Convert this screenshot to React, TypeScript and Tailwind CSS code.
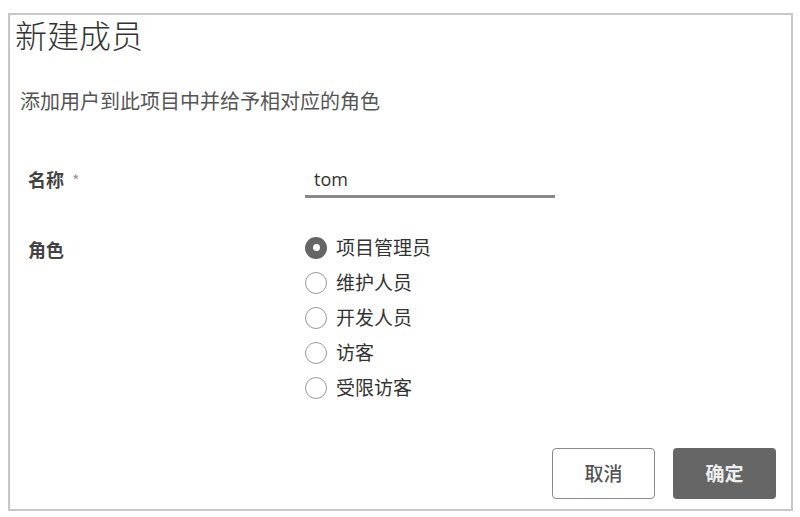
import { useState } from 'react';

const ROLES = ['项目管理员', '维护人员', '开发人员', '访客', '受限访客'];

const FONT = { fontFamily: '"Noto Sans CJK SC", "Noto Sans", sans-serif' };

export default function App() {
  const [name, setName] = useState('tom');
  const [role, setRole] = useState(ROLES[0]);

  return (
    <div className="bg-white w-[800px] h-[517px] pt-[13px] pl-[8px]" style={FONT}>
      <div className="w-[785px] h-[498px] border-2 border-[#c8c8c8] flex flex-col">
        <h1 className="pl-[5px] text-[32px] leading-[38px] font-light text-[#333]">新建成员</h1>

        <p className="mt-[34px] pl-[10px] text-[20px] leading-[28px] text-[#555]">
          添加用户到此项目中并给予相对应的角色
        </p>

        <div className="mt-[45px] flex items-center">
          <label className="w-[277px] ml-[18px] text-[18px] font-bold text-[#444]">
            名称<span className="ml-[8px] text-[#999] font-normal text-[16px]">*</span>
          </label>
          <div className="w-[250px] h-[38px] border-b-[3px] border-[#888] flex items-center pl-[9px] pt-[4px]">
            <input
              autoFocus
              value={name}
              onChange={(e) => setName(e.target.value)}
              className="w-full outline-none text-[18px] text-[#333] bg-transparent caret-[#222]"
              style={{ fontFamily: '"Open Sans", sans-serif' }}
            />
          </div>
        </div>

        <div className="mt-[32px] flex">
          <div className="w-[277px] ml-[18px] h-[35px] flex items-center pt-[4px] text-[18px] font-bold text-[#444]">
            角色
          </div>
          <div className="flex flex-col">
            {ROLES.map((r) => {
              const on = r === role;
              return (
                <button
                  key={r}
                  onClick={() => setRole(r)}
                  className="h-[35px] flex items-center gap-[9px] text-left"
                >
                  {on ? (
                    <span className="w-[22px] h-[22px] rounded-full bg-[#666] flex items-center justify-center">
                      <span className="w-[7px] h-[7px] rounded-full bg-white" />
                    </span>
                  ) : (
                    <span className="w-[22px] h-[22px] rounded-full border-[1.5px] border-[#9a9a9a] bg-white" />
                  )}
                  <span className="text-[19px] text-[#333]">{r}</span>
                </button>
              );
            })}
          </div>
        </div>

        <div className="mt-auto flex justify-end gap-[18px] pr-[15px] pb-[10px]">
          <button className="w-[103px] h-[51px] rounded-[4px] border border-[#8a8a8a] bg-white text-[19px] font-medium text-[#555]">
            取消
          </button>
          <button className="w-[103px] h-[51px] rounded-[4px] bg-[#666] text-[19px] font-bold text-[#eee]">
            确定
          </button>
        </div>
      </div>
    </div>
  );
}
